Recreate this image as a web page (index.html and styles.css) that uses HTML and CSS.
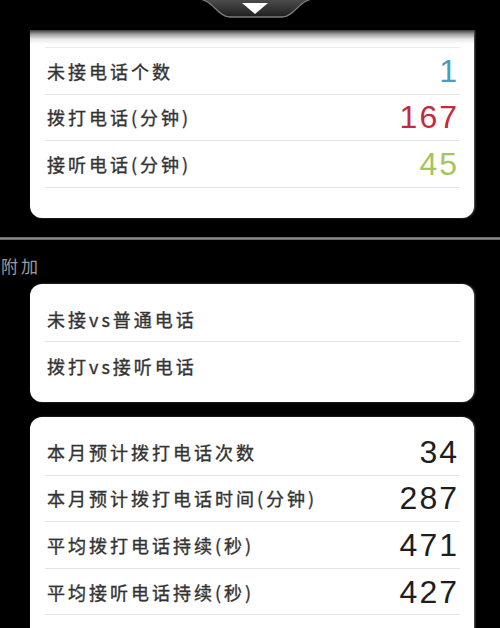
FILE: index.html
```html
<!DOCTYPE html>
<html lang="zh-CN">
<head>
<meta charset="utf-8">
<title>通话统计</title>
<link rel="stylesheet" href="styles.css">
</head>
<body>
<div class="screen">
  <div class="top-bar">
    <svg class="pull-tab" width="120" height="22" viewBox="0 0 120 22">
      <defs>
        <linearGradient id="tabfill" x1="0" y1="0" x2="0" y2="1">
          <stop offset="0" stop-color="#4e4e4e"/>
          <stop offset="1" stop-color="#1e1e1e"/>
        </linearGradient>
      </defs>
      <path d="M2 0 C16 0 22 18 34 18 L86 18 C98 18 104 0 118 0 Z" fill="url(#tabfill)" stroke="#7c7c7c" stroke-width="1.3"/>
      <polygon points="46,4 72,4 59,15" fill="#ffffff"/>
    </svg>
  </div>

  <section class="card card-summary">
    <div class="fade-strip"></div>
    <div class="row first">
      <span class="label">未接电话个数</span>
      <span class="value blue">1</span>
    </div>
    <div class="row">
      <span class="label">拨打电话(分钟)</span>
      <span class="value red">167</span>
    </div>
    <div class="row">
      <span class="label">接听电话(分钟)</span>
      <span class="value green">45</span>
    </div>
  </section>

  <div class="divider"></div>
  <div class="section-title">附加</div>

  <section class="card card-links">
    <div class="row">
      <span class="label">未接vs普通电话</span>
    </div>
    <div class="row last">
      <span class="label">拨打vs接听电话</span>
    </div>
  </section>

  <section class="card card-forecast">
    <div class="row">
      <span class="label">本月预计拨打电话次数</span>
      <span class="value dark">34</span>
    </div>
    <div class="row">
      <span class="label">本月预计拨打电话时间(分钟)</span>
      <span class="value dark">287</span>
    </div>
    <div class="row">
      <span class="label">平均拨打电话持续(秒)</span>
      <span class="value dark">471</span>
    </div>
    <div class="row">
      <span class="label">平均接听电话持续(秒)</span>
      <span class="value dark">427</span>
    </div>
  </section>
</div>
</body>
</html>
```

FILE: styles.css
```css
html, body {
  margin: 0;
  padding: 0;
  background: #000;
}

body {
  width: 500px;
  height: 628px;
  overflow: hidden;
  font-family: "Noto Sans CJK SC", "DejaVu Sans", sans-serif;
}

.screen {
  display: flex;
  flex-direction: column;
  width: 500px;
}

.top-bar {
  position: relative;
  height: 30px;
  background: #000;
}

.pull-tab {
  position: absolute;
  left: 196px;
  top: -1px;
  display: block;
}

.card {
  margin: 0 26px 0 30px;
  background: #fff;
  border-radius: 12px;
  box-shadow: 1px 0 2px rgba(160, 160, 160, 0.6);
  display: flex;
  flex-direction: column;
}

.card-summary {
  border-radius: 0 0 12px 12px;
  padding-bottom: 30px;
  overflow: hidden;
}

.fade-strip {
  height: 17px;
  background: linear-gradient(to bottom, #3a3a3a 0, #9a9a9a 4px, #e6e6e6 9px, #ffffff 14px);
}

.row {
  box-sizing: border-box;
  height: 46.6px;
  margin: 0 14px 0 15px;
  padding: 0 3px 0 2px;
  display: flex;
  align-items: center;
  justify-content: space-between;
  border-bottom: 1px solid #e4e4e4;
}

.row.first {
  border-top: 1px solid #ececec;
  height: 47.6px;
}

.row.last {
  border-bottom: none;
}

.label {
  font-size: 18px;
  letter-spacing: 3px;
  color: #333;
  font-weight: 400;
  -webkit-text-stroke: 0.35px #333;
  white-space: nowrap;
}

.value {
  font-family: "Liberation Sans", "DejaVu Sans", sans-serif;
  font-size: 32px;
  letter-spacing: 2px;
  margin-right: -2px;
  line-height: 1;
}

.blue { color: #4c9bbc; }
.red { color: #c42a3c; }
.green { color: #a6c55c; }
.dark { color: #1e1e1e; }

.divider {
  margin-top: 19px;
  height: 3px;
  background: linear-gradient(to bottom, #5c5c5c, #8a8a8a, #5c5c5c);
}

.section-title {
  box-sizing: border-box;
  height: 44px;
  padding: 8px 0 0 1px;
  display: flex;
  align-items: center;
  font-size: 17px;
  letter-spacing: 3px;
  color: #9c9c9c;
}

.card-links {
  padding: 12px 0 13px;
}

.card-forecast {
  margin-top: 15px;
  padding: 12px 0 40px;
}
```
